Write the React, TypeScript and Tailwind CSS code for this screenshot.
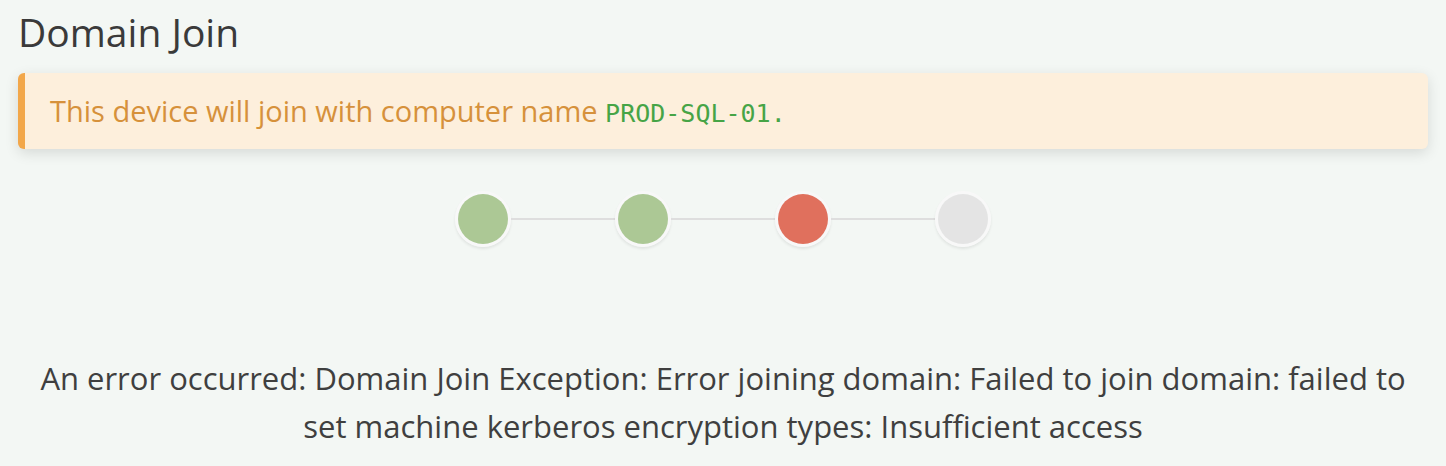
import React from 'react';

const steps = ['done', 'done', 'error', 'pending'] as const;

const dotColor: Record<(typeof steps)[number], string> = {
  done: 'bg-[#acc895]',
  error: 'bg-[#e0705d]',
  pending: 'bg-[#e4e4e4]',
};

const App: React.FC = () => {
  return (
    <div className="min-h-[466px] bg-[#f3f7f4] px-[18px] pt-[7px] font-['Open_Sans',sans-serif] text-[#3a3a3a]">
      <h1 className="text-[39px] leading-[50px]">Domain Join</h1>

      <div className="mt-[16px] flex h-[76px] items-center rounded-[6px] border-l-[7px] border-[#f2a74a] bg-[#fdefdc] pl-[25px] shadow-[0_4px_14px_rgba(0,0,0,0.12)]">
        <p className="text-[29px] text-[#d6913b]">
          This device will join with computer name{' '}
          <code className="font-['DejaVu_Sans_Mono',monospace] text-[25px] text-[#46a446]">PROD-SQL-01.</code>
        </p>
      </div>

      <div className="mt-[42px] flex items-center justify-center">
        {steps.map((s, i) => (
          <React.Fragment key={i}>
            {i > 0 && <div className="h-[2px] w-[104px] bg-[#dedede]" />}
            <div className="rounded-full border-[3px] border-[#f8f8f8] shadow-[0_2px_3px_rgba(0,0,0,0.08)]">
              <div className={`h-[50px] w-[50px] rounded-full ${dotColor[s]}`} />
            </div>
          </React.Fragment>
        ))}
      </div>

      <p className="mx-auto mt-[107px] max-w-[1390px] text-center text-[31px] leading-[48px] text-[#3f3f3f]">
        An error occurred: Domain Join Exception: Error joining domain: Failed to join domain: failed to set machine kerberos encryption types: Insufficient access
      </p>
    </div>
  );
};

export default App;
